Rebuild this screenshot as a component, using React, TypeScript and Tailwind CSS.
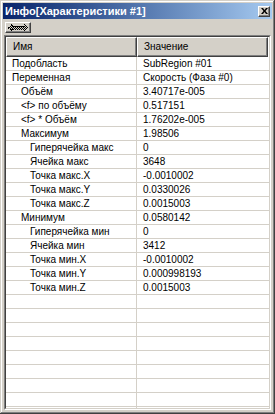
const rows: [number, string, string][] = [
  [0, "Подобласть", "SubRegion #01"],
  [0, "Переменная", "Скорость (Фаза #0)"],
  [1, "Объём", "3.40717e-005"],
  [1, "<f> по объёму", "0.517151"],
  [1, "<f> * Объём", "1.76202e-005"],
  [1, "Максимум", "1.98506"],
  [2, "Гиперячейка макс", "0"],
  [2, "Ячейка макс", "3648"],
  [2, "Точка макс.X", "-0.0010002"],
  [2, "Точка макс.Y", "0.0330026"],
  [2, "Точка макс.Z", "0.0015003"],
  [1, "Минимум", "0.0580142"],
  [2, "Гиперячейка мин", "0"],
  [2, "Ячейка мин", "3412"],
  [2, "Точка мин.X", "-0.0010002"],
  [2, "Точка мин.Y", "0.000998193"],
  [2, "Точка мин.Z", "0.0015003"],
];

const indent = ["pl-[6px]", "pl-[15px]", "pl-[24px]"];

function HeaderCell({ label, className }: { label: string; className: string }) {
  return (
    <div
      className={`${className} h-full flex items-center pl-[6px] bg-[#d4d0c8] border border-t-white border-l-white border-b-[#404040] border-r-[#404040] shadow-[inset_-1px_-1px_#808080]`}
    >
      {label}
    </div>
  );
}

export default function App() {
  const empty = Array.from({ length: 9 });

  return (
    <div
      className="w-[275px] h-[414px] flex flex-col bg-[#d4d0c8] p-[3px] shadow-[inset_-1px_-1px_#404040,inset_1px_1px_#d4d0c8,inset_-2px_-2px_#808080,inset_2px_2px_#ffffff] text-black text-[10px] leading-none"
      style={{ fontFamily: '"Liberation Sans", Arial, sans-serif' }}
    >
      {/* Title bar */}
      <div className="h-[16px] shrink-0 flex items-center justify-between pl-[2px] pr-[2px] bg-linear-to-r from-[#0a246a] to-[#a6caf0]">
        <span className="text-white font-bold text-[11px]">Инфо[Характеристики #1]</span>
        <div className="w-[12px] h-[11px] flex items-center justify-center bg-[#d4d0c8] border border-t-white border-l-white border-b-[#404040] border-r-[#404040] shadow-[inset_-1px_-1px_#808080]">
          <svg width="7" height="6" viewBox="0 0 7 6">
            <path d="M0 0h2l1.5 2L5 0h2L4.5 3 7 6H5L3.5 4 2 6H0l2.5-3z" fill="#000" />
          </svg>
        </div>
      </div>

      {/* Toolbar */}
      <div className="h-[16px] shrink-0 flex items-start pt-[3px] pl-[2px]">
        <div className="w-[26px] h-[11px] flex items-center justify-center bg-[#d4d0c8] border border-t-white border-l-white border-b-[#404040] border-r-[#404040] shadow-[inset_-1px_-1px_#808080]">
          <svg width="20" height="7" viewBox="0 0 20 7" shapeRendering="crispEdges">
            <defs>
              <pattern id="dots" width="2" height="2" patternUnits="userSpaceOnUse">
                <rect width="1" height="1" fill="#000" />
                <rect x="1" y="1" width="1" height="1" fill="#000" />
              </pattern>
            </defs>
            <polygon
              points="0,3.5 4,0 4,2 16,2 16,0 20,3.5 16,7 16,5 4,5 4,7"
              fill="url(#dots)"
              stroke="#000"
              strokeWidth="1"
              strokeDasharray="1 1"
            />
          </svg>
        </div>
      </div>

      {/* Property grid */}
      <div className="flex-1 min-h-0 mx-[1px] mb-[1px] border border-t-[#808080] border-l-[#808080] border-b-white border-r-white">
        <div className="h-full overflow-hidden bg-white border border-t-[#404040] border-l-[#404040] border-b-[#d4d0c8] border-r-[#d4d0c8]">
          <div className="h-[20px] flex pr-[1px]">
            <HeaderCell label="Имя" className="w-[131px]" />
            <HeaderCell label="Значение" className="flex-1" />
          </div>
          {rows.map(([level, name, value], i) => (
            <div key={i} className="h-[14px] flex border-b border-[#d4d0c8]">
              <div className={`w-[131px] h-full flex items-center border-r border-[#d4d0c8] ${indent[level]}`}>
                {name}
              </div>
              <div className="flex-1 h-full flex items-center pl-[6px]">{value}</div>
            </div>
          ))}
          {empty.map((_, i) => (
            <div key={`e${i}`} className="h-[14px] flex border-b border-[#d4d0c8]">
              <div className="w-[131px] h-full border-r border-[#d4d0c8]" />
              <div className="flex-1" />
            </div>
          ))}
        </div>
      </div>
    </div>
  );
}
